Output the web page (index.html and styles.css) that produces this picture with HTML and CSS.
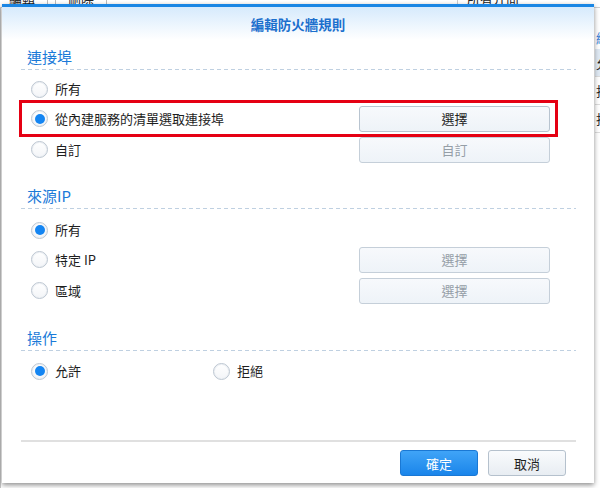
FILE: index.html
```html
<!DOCTYPE html>
<html lang="zh-Hant">
<head>
<meta charset="utf-8">
<title>編輯防火牆規則</title>
<link rel="stylesheet" href="styles.css">
</head>
<body>
<div class="page">
  <div class="toolbar">
    <span class="tb-btn tb-first">編輯</span>
    <span class="tb-gap"></span>
    <span class="tb-btn">刪除</span>
    <span class="tb-spacer"></span>
    <span class="tb-col">所有介面</span>
  </div>
  <div class="main">
    <div class="left"></div>
    <div class="right">
      <div class="r-head">編號</div>
      <div class="r-row r-sel">允許</div>
      <div class="r-row">拒絕</div>
      <div class="r-row">拒絕</div>
    </div>
  </div>
</div>

<div class="dialog">
  <div class="dlg-head">編輯防火牆規則</div>
  <div class="dlg-body">
    <div class="sec-title">連接埠</div>
    <div class="rows rows-a">
      <div class="row">
        <label class="opt"><span class="radio"></span>所有</label>
      </div>
      <div class="row row-btn">
        <label class="opt"><span class="radio on"></span>從內建服務的清單選取連接埠</label>
        <span class="btn">選擇</span>
      </div>
      <div class="row row-btn">
        <label class="opt"><span class="radio"></span>自訂</label>
        <span class="btn disabled">自訂</span>
      </div>
    </div>

    <div class="sec-title sec-next">來源IP</div>
    <div class="rows rows-b">
      <div class="row">
        <label class="opt"><span class="radio on"></span>所有</label>
      </div>
      <div class="row row-btn">
        <label class="opt"><span class="radio"></span>特定 IP</label>
        <span class="btn disabled">選擇</span>
      </div>
      <div class="row row-btn">
        <label class="opt"><span class="radio"></span>區域</label>
        <span class="btn disabled">選擇</span>
      </div>
    </div>

    <div class="sec-title sec-last">操作</div>
    <div class="rows rows-c">
      <div class="row row-pair">
        <label class="opt"><span class="radio on"></span>允許</label>
        <label class="opt"><span class="radio"></span>拒絕</label>
      </div>
    </div>

    <div class="highlight"></div>
  </div>
  <div class="dlg-foot">
    <span class="fbtn primary">確定</span>
    <span class="fbtn">取消</span>
  </div>
</div>
</body>
</html>
```

FILE: styles.css
```css
* {
  box-sizing: border-box;
  margin: 0;
  padding: 0;
}

html, body {
  width: 600px;
  height: 488px;
  overflow: hidden;
}

body {
  position: relative;
  background: #fff;
  font-family: "Noto Sans CJK TC", "Noto Sans", sans-serif;
  font-size: 13px;
  color: #1e1e1e;
}

/* background page behind the dialog */
.page {
  display: flex;
  flex-direction: column;
  height: 488px;
}

.toolbar {
  display: flex;
  align-items: center;
  height: 18px;
  margin-top: -10px;
  border-bottom: 1px solid #d0d0d0;
  font-size: 13px;
  line-height: 18px;
  color: #222;
}

.tb-btn {
  padding: 0 12px;
  border-right: 1px solid #bbb;
}

.tb-first {
  padding-left: 9px;
}

.tb-gap {
  width: 8px;
  align-self: stretch;
  border-right: 1px solid #bbb;
}

.tb-spacer {
  flex: 1;
  align-self: stretch;
  border-right: 1px solid #ccc;
}

.tb-col {
  width: 142px;
  padding-left: 9px;
}

.main {
  flex: 1;
  display: flex;
}

.left {
  flex: 1;
  border-left: 1px solid #c4c4c4;
}

.right {
  width: 5px;
  overflow: hidden;
  white-space: nowrap;
  padding-top: 18px;
}

.r-head {
  height: 23px;
  line-height: 23px;
  color: #1a6fcf;
  padding-left: 1px;
}

.r-row {
  height: 28px;
  line-height: 28px;
  border-bottom: 1px solid #dcdcdc;
  padding-left: 1px;
}

.r-sel {
  background: #dfe9f3;
}

/* dialog */
.dialog {
  position: absolute;
  left: 2px;
  top: 4px;
  width: 592px;
  height: 479px;
  background: #fff;
  border-top: 3px solid #1a86e4;
  box-shadow: 0 2px 5px rgba(0, 0, 0, 0.45);
  display: flex;
  flex-direction: column;
}

.dlg-head {
  height: 33px;
  display: flex;
  align-items: center;
  justify-content: center;
  background: linear-gradient(#d6eafc, #ffffff);
  color: #1b6fcd;
  font-size: 13.5px;
  font-weight: bold;
}

.dlg-body {
  flex: 1;
  position: relative;
  padding: 0 18px 0 19px;
}

.sec-title {
  margin-top: 7px;
  padding: 0 0 3px 6px;
  font-size: 15px;
  line-height: 20px;
  color: #1a7ad8;
  background: repeating-linear-gradient(to right, #bfd0e1 0 4px, transparent 4px 7px) left bottom / 100% 1px no-repeat;
}

.sec-next {
  margin-top: 21px;
}

.sec-last {
  margin-top: 22px;
}

.rows-a {
  padding-top: 5px;
}

.rows-b {
  padding-top: 7px;
}

.rows-c {
  padding-top: 6px;
}

.row {
  display: grid;
  grid-template-columns: 338px 191px;
  align-items: center;
  height: 28px;
}

.row-btn {
  height: 31px;
}

.row-pair {
  grid-template-columns: 182px 150px;
}

.opt {
  display: flex;
  align-items: center;
  gap: 7px;
  padding-left: 10px;
  line-height: 18px;
  color: #1e1e1e;
}

.radio {
  width: 17px;
  height: 17px;
  flex: none;
  border-radius: 50%;
  border: 1px solid #bcc6d1;
  box-shadow: inset 0 0 0 1px #eef1f5;
  background: linear-gradient(#ffffff, #f3f5f8);
  display: flex;
  align-items: center;
  justify-content: center;
}

.radio.on::after {
  content: "";
  width: 10px;
  height: 10px;
  border-radius: 50%;
  background: #1485f2;
}

.btn {
  height: 26px;
  display: flex;
  align-items: center;
  justify-content: center;
  border: 1px solid #b8c4d0;
  border-radius: 3px;
  background: linear-gradient(#f7f9fc, #eef3f8);
  color: #1e1e1e;
}

.btn.disabled {
  border-color: #c5cfd9;
  color: #959ea7;
}

.highlight {
  position: absolute;
  left: 17px;
  top: 60px;
  width: 539px;
  height: 37px;
  border: 3px solid #e50013;
}

.dlg-foot {
  margin: 0 18px 0 19px;
  border-top: 2px solid #e0e0e0;
  padding: 8px 10px 7px 0;
  display: flex;
  justify-content: flex-end;
  gap: 10px;
}

.fbtn {
  width: 78px;
  height: 26px;
  display: flex;
  align-items: center;
  justify-content: center;
  border: 1px solid #b5c1cd;
  border-radius: 3px;
  background: linear-gradient(#f9fbfd, #e8edf2);
  color: #1e1e1e;
}

.fbtn.primary {
  border-color: #1a78d4;
  background: linear-gradient(#40a4f7, #1a85ea);
  color: #fff;
}
```
